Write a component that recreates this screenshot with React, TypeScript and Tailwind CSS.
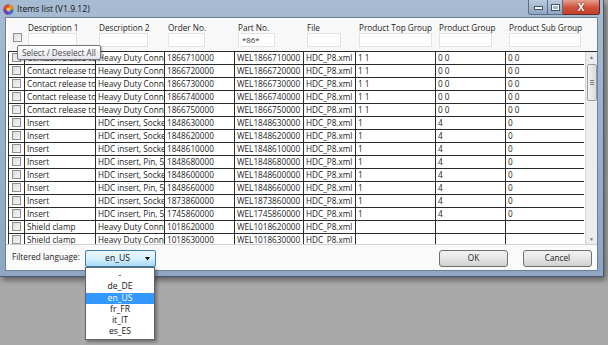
import React from "react";

const font = { fontFamily: '"Open Sans", "Noto Sans", sans-serif' };

type Row = string[];

const rows: Row[] = [
  ["Contact release tool", "Heavy Duty Connectors", "1866710000", "WEL1866710000", "HDC_P8.xml", "1 1", "0 0", "0 0"],
  ["Contact release tool", "Heavy Duty Connectors", "1866720000", "WEL1866720000", "HDC_P8.xml", "1 1", "0 0", "0 0"],
  ["Contact release tool", "Heavy Duty Connectors", "1866730000", "WEL1866730000", "HDC_P8.xml", "1 1", "0 0", "0 0"],
  ["Contact release tool", "Heavy Duty Connectors", "1866740000", "WEL1866740000", "HDC_P8.xml", "1 1", "0 0", "0 0"],
  ["Contact release tool", "Heavy Duty Connectors", "1866750000", "WEL1866750000", "HDC_P8.xml", "1 1", "0 0", "0 0"],
  ["Insert", "HDC insert, Socket", "1848630000", "WEL1848630000", "HDC_P8.xml", "1", "4", "0"],
  ["Insert", "HDC insert, Socket", "1848620000", "WEL1848620000", "HDC_P8.xml", "1", "4", "0"],
  ["Insert", "HDC insert, Socket", "1848610000", "WEL1848610000", "HDC_P8.xml", "1", "4", "0"],
  ["Insert", "HDC insert, Pin, 5 pol", "1848680000", "WEL1848680000", "HDC_P8.xml", "1", "4", "0"],
  ["Insert", "HDC insert, Socket", "1848600000", "WEL1848600000", "HDC_P8.xml", "1", "4", "0"],
  ["Insert", "HDC insert, Pin, 5 pol", "1848660000", "WEL1848660000", "HDC_P8.xml", "1", "4", "0"],
  ["Insert", "HDC insert, Socket", "1873860000", "WEL1873860000", "HDC_P8.xml", "1", "4", "0"],
  ["Insert", "HDC insert, Pin, 5 pol", "1745860000", "WEL1745860000", "HDC_P8.xml", "1", "4", "0"],
  ["Shield clamp", "Heavy Duty Connectors", "1018620000", "WEL1018620000", "HDC_P8.xml", "", "", ""],
  ["Shield clamp", "Heavy Duty Connectors", "1018630000", "WEL1018630000", "HDC_P8.xml", "", "", ""],
];

// column widths after the checkbox column
const widths = ["w-[71px]", "w-[69px]", "w-[70px]", "w-[69px]", "w-[52px]", "w-[80px]", "w-[70px]", "w-[79px]"];

const headers = [
  { title: "Description 1", input: "w-[49px]", value: "" },
  { title: "Description 2", input: "w-[49px]", value: "" },
  { title: "Order No.", input: "w-[37px]", value: "" },
  { title: "Part No.", input: "w-[37px]", value: "*86*" },
  { title: "File", input: "w-[34px]", value: "" },
  { title: "Product Top Group", input: "w-[73px]", value: "" },
  { title: "Product Group", input: "w-[53px]", value: "" },
  { title: "Product Sub Group", input: "w-[72px]", value: "" },
];

function Check() {
  return (
    <div className="w-[9px] h-[9px] border border-[#8e8f8f] bg-gradient-to-br from-[#dcdcdc] to-[#f6f6f6]" />
  );
}

function AppIcon() {
  return (
    <svg width="11" height="11" viewBox="0 0 12 12">
      <circle cx="6" cy="6" r="5.6" fill="#3b6fc9" />
      <path d="M6 0.4 A5.6 5.6 0 0 1 11.6 6 L6 6 Z" fill="#f08a1c" />
      <path d="M0.4 6 A5.6 5.6 0 0 1 6 0.4 L6 6 Z" fill="#e04a2a" />
      <path d="M6 11.6 A5.6 5.6 0 0 1 0.4 6 L6 6 Z" fill="#7a3fb0" />
      <circle cx="6" cy="6" r="2.2" fill="#f4c24a" />
    </svg>
  );
}

export default function App() {
  return (
    <div className="relative w-[608px] h-[345px] bg-[#a9a9a9] overflow-hidden text-[#1b1b1b]" style={font}>
      {/* window */}
      <div className="w-[604px] h-[277px] flex flex-col bg-gradient-to-b from-[#a7bbd2] to-[#8ea6c2] border-r border-b border-[#4d5a6b] shadow-[2px_3px_6px_rgba(0,0,0,0.45)]">
        {/* title bar */}
        <div className="h-[17px] flex items-center shrink-0">
          <div className="ml-[3px] mt-[1px]">
            <AppIcon />
          </div>
          <span className="ml-[3px] text-[8.6px] text-[#111] mt-[1px] whitespace-nowrap">Items list (V1.9.12)</span>
          <div className="ml-auto mr-[3px] self-start flex h-[15px]">
            <div className="w-[20px] h-full rounded-bl-[3px] border border-t-0 border-[#5d6f86] bg-gradient-to-b from-[#b9cbe0] to-[#8fa6c1] flex items-end justify-center pb-[4px]">
              <div className="w-[7px] h-[2px] bg-white border border-[#44546a] box-content" />
            </div>
            <div className="w-[15px] h-full border-b border-r border-[#5d6f86] bg-gradient-to-b from-[#b9cbe0] to-[#8fa6c1] flex items-center justify-center">
              <div className="w-[7px] h-[5px] border-[1.5px] border-white outline outline-1 outline-[#44546a]" />
            </div>
            <div className="w-[37px] h-full rounded-br-[3px] border border-t-0 border-l-0 border-[#6a2a24] bg-gradient-to-b from-[#e6a08f] via-[#d0543e] to-[#c0402c] flex items-center justify-center">
              <span className="text-white text-[10px] font-bold leading-none" style={{ textShadow: "0 0 2px #5a1a10" }}>
                X
              </span>
            </div>
          </div>
        </div>

        {/* client area */}
        <div className="flex-1 ml-[5px] mr-[5px] mb-[5px] bg-[#fafafa] border border-[#6e8096] flex flex-col overflow-hidden">
          {/* grid */}
          <div className="h-[226px] flex flex-col bg-white overflow-hidden">
            {/* header */}
            <div className="h-[34px] shrink-0 flex bg-[#f8f8f8] border-b border-[#2a2a2a] ml-[2px]">
              <div className="w-[17px] pl-[5px] pt-[15px]">
                <Check />
              </div>
              {headers.map((h, i) => (
                <div key={i} className={`${widths[i]} pl-[3px] pt-[4px] flex flex-col`}>
                  <div className="h-[11px] text-[8.2px] leading-[11px] whitespace-nowrap text-[#222]">{h.title}</div>
                  <div className={`${h.input} h-[14px] bg-white border border-[#e2e2e2] text-[7.8px] leading-[13px] pl-[3px] text-[#333]`}>
                    {h.value}
                  </div>
                </div>
              ))}
            </div>
            {/* rows + scrollbar */}
            <div className="flex-1 flex overflow-hidden">
              <div className="w-[578px] ml-[2px] border-l border-[#2a2a2a] flex flex-col overflow-hidden">
                {rows.map((r, ri) => (
                  <div key={ri} className="h-[13px] shrink-0 flex border-b border-[#2a2a2a]">
                    <div className="w-[16px] shrink-0 border-r border-[#2a2a2a] pl-[3px] pt-[1px]">
                      <Check />
                    </div>
                    {r.map((c, ci) => (
                      <div
                        key={ci}
                        className={`${widths[ci]} shrink-0 border-r border-[#2a2a2a] pl-[2px] text-[8.2px] leading-[12px] whitespace-nowrap overflow-hidden`}
                      >
                        {c}
                      </div>
                    ))}
                  </div>
                ))}
              </div>
              {/* scrollbar */}
              <div className="w-[12px] ml-[1px] bg-[#ececec] border-l border-[#d6d6d6] flex flex-col items-center">
                <div className="h-[11px] text-[5px] leading-[11px] text-[#777]">▲</div>
                <div className="w-[10px] h-[37px] mt-[1px] rounded-[2px] border border-[#9c9c9c] bg-gradient-to-r from-[#f2f2f2] to-[#d9d9d9] flex flex-col items-center justify-center gap-[1px]">
                  <div className="w-[4px] h-px bg-[#7a7a7a]" />
                  <div className="w-[4px] h-px bg-[#7a7a7a]" />
                  <div className="w-[4px] h-px bg-[#7a7a7a]" />
                </div>
                <div className="mt-auto h-[10px] text-[5px] leading-[10px] text-[#777]">▼</div>
              </div>
            </div>
          </div>

          {/* bottom panel */}
          <div className="flex-1 border-t border-[#d2d2d2] flex items-center pl-[6px] pr-[5px]">
            <span className="text-[8.2px] text-[#222] w-[73px] whitespace-nowrap">Filtered language:</span>
            <div className="w-[71px] h-[17px] mt-[1px] rounded-[2px] border border-[#3c7fb1] bg-gradient-to-b from-[#eaf6fd] via-[#d9f0fc] to-[#a7d9f5] flex items-center relative">
              <span className="flex-1 text-center text-[8.6px] pr-[6px] text-[#111]">en_US</span>
              <svg className="absolute right-[5px] top-[6px]" width="5" height="4" viewBox="0 0 5 4">
                <path d="M0 0 H5 L2.5 3.5 Z" fill="#111" />
              </svg>
            </div>
            <div className="ml-auto flex gap-[15px] mt-[2px]">
              <div className="w-[69px] h-[17px] rounded-[3px] border border-[#707070] bg-gradient-to-b from-[#f2f2f2] via-[#e6e6e6] to-[#cfcfcf] flex items-center justify-center text-[8.2px] text-[#222]">
                OK
              </div>
              <div className="w-[69px] h-[17px] rounded-[3px] border border-[#707070] bg-gradient-to-b from-[#f2f2f2] via-[#e6e6e6] to-[#cfcfcf] flex items-center justify-center text-[8.2px] text-[#222]">
                Cancel
              </div>
            </div>
          </div>
        </div>
      </div>

      {/* tooltip */}
      <div className="absolute left-[17px] top-[45px] h-[15px] px-[4px] rounded-[2px] border border-[#767676] bg-gradient-to-b from-white to-[#e4e5f0] text-[8.2px] leading-[13px] text-[#4c4c4c] whitespace-nowrap shadow-[1px_1px_2px_rgba(0,0,0,0.3)]">
        Select / Deselect All
      </div>

      {/* dropdown list */}
      <div className="absolute left-[85px] top-[267px] w-[70px] pt-[2px] pb-[1px] bg-white border border-[#646464] shadow-[2px_2px_3px_rgba(0,0,0,0.35)] flex flex-col">
        {["-", "de_DE", "en_US", "fr_FR", "it_IT", "es_ES"].map((l) => (
          <div
            key={l}
            className={`h-[11.3px] text-center text-[8.6px] leading-[11px] ${l === "en_US" ? "bg-[#3399ff] text-white" : "text-[#111]"}`}
          >
            {l}
          </div>
        ))}
      </div>
    </div>
  );
}
